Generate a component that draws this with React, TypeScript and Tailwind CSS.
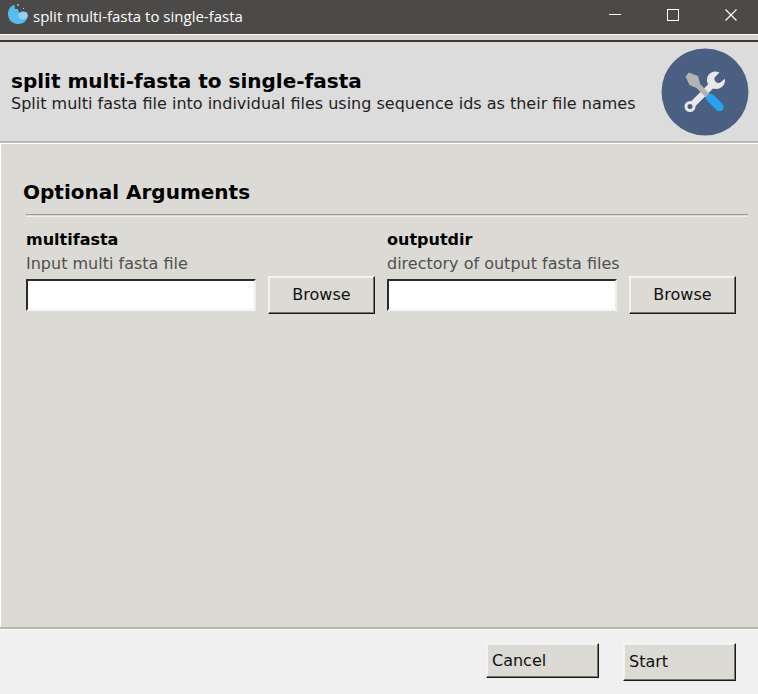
import React from "react";

const raised =
  "border border-t-[#f6f6f4] border-l-[#f6f6f4] border-r-[#1b1a18] border-b-[#1b1a18] bg-[#dcdad5] text-[#111] shadow-[inset_-1px_-1px_0_#77746e,inset_1px_1px_0_#f2f1ee]";

function AppLogo() {
  return (
    <svg width="22" height="22" viewBox="0 0 22 22" aria-hidden="true">
      <path
        d="M7 2C3.500 3 1 6.500 1 11c0 5.700 4.500 10 10 10S20.300 17.500 20.800 12.500C20.500 9.500 19 8.600 16.800 9.200c-1.500 0-2.300 1.500-3.800 1.500C11.500 10 12.500 8 11 7.500 9.500 7.500 10 6 8.500 6 6.500 5.500 9 3.500 7 2z"
        fill="#55bdee"
      />
      <ellipse cx="16" cy="12.500" rx="4.800" ry="4" fill="#93d0ef" />
      <rect x="10" y="1" width="2" height="2" fill="#55bdee" />
      <rect x="8" y="6" width="3" height="2" fill="#55bdee" />
      <rect x="16" y="5" width="1" height="1" fill="#93d0ef" />
    </svg>
  );
}

function ToolsIcon() {
  return (
    <svg width="88" height="88" viewBox="0 0 88 88" className="shrink-0" aria-hidden="true">
      <circle cx="44" cy="44" r="43.500" fill="#4b5f83" />
      <path d="M32 56L52 36" stroke="#e8e8e8" strokeWidth="6.500" />
      <circle cx="29" cy="58.500" r="4" fill="#4b5f83" stroke="#e8e8e8" strokeWidth="3" />
      <path
        d="M58.500 24.500C52 21.500 46 25.500 46 32c0 5 3.500 9 9 9 5.500 0 9.500-4 9-10.200l-5.500 4.200c-3.500 0-5.500-2-5-5.500z"
        fill="#e8e8e8"
      />
      <path d="M28 24.500l9 3.500 2.200 8L49 46.500 45.500 50 35.500 40l-7-3-4-8.500z" fill="#b3b3b3" />
      <path d="M49.500 50L58.500 59" stroke="#23a5f2" strokeWidth="8.500" strokeLinecap="round" />
    </svg>
  );
}

function TitleBar() {
  const control = "flex h-[30px] w-[54px] items-center justify-center";
  return (
    <div className="flex h-[34px] items-start bg-[#4c4a48] pl-[7px] text-white">
      <div className="flex h-8 flex-1 items-center gap-1">
        <div className="-mt-1">
          <AppLogo />
        </div>
        <span className="font-['Open_Sans','Noto_Sans',sans-serif] text-[15px] leading-5">
          split multi-fasta to single-fasta
        </span>
      </div>
      <div className="flex gap-1">
        <button type="button" aria-label="Minimize" className={control}>
          <svg width="12" height="12"><path d="M0 5.500h12" stroke="white" /></svg>
        </button>
        <button type="button" aria-label="Maximize" className={control}>
          <svg width="12" height="12"><rect x=".5" y=".5" width="11" height="11" fill="none" stroke="white" /></svg>
        </button>
        <button type="button" aria-label="Close" className={control}>
          <svg width="12" height="12"><path d="M.5.5l11 11M11.500.5l-11 11" stroke="white" strokeWidth="1.200" /></svg>
        </button>
      </div>
    </div>
  );
}

function FileField({ id, help }: { id: string; help: string }) {
  return (
    <div>
      <label htmlFor={id} className="block text-[16px] leading-6 font-bold">
        {id}
      </label>
      <p className="text-[16px] leading-6 text-[#505050]">{help}</p>
      <div className="flex items-center gap-3">
        <input
          id={id}
          type="text"
          className="h-8 min-w-0 flex-1 border-2 border-t-[#2b2a28] border-r-[#eeece8] border-b-[#f6f6f4] border-l-[#2b2a28] bg-white px-1 text-[16px] outline-none"
        />
        <button type="button" className={`${raised} h-[38px] w-[107px] text-[16px]`}>
          Browse
        </button>
      </div>
    </div>
  );
}

export default function App() {
  return (
    <div className="flex min-h-screen flex-col bg-[#dcdad5] font-['DejaVu_Sans',sans-serif] text-black">
      <TitleBar />
      <div className="h-2 border-t border-b-2 border-t-white border-b-[#3c3a38] bg-[#d6d3cf]" />
      <header className="flex items-center justify-between border-b-2 border-b-[#b9b7b1] bg-[#dcdcdc] pt-[6px] pr-[9px] pb-[5px] pl-[11px]">
        <div>
          <h1 className="text-[20px] leading-6 font-bold">split multi-fasta to single-fasta</h1>
          <p className="text-[16px] leading-[22px] whitespace-nowrap text-[#222]">
            Split multi fasta file into individual files using sequence ids as their file names
          </p>
        </div>
        <ToolsIcon />
      </header>
      <main className="flex-1 border-t border-l border-white pt-[34px] pr-[10px] pl-[22px]">
        <h2 className="text-[20px] leading-7 font-bold">Optional Arguments</h2>
        <div className="mt-2 ml-[3px] h-[3px] border-t border-b border-t-[#9b9993] border-b-[#f0efec]" />
        <div className="mt-[11px] grid grid-cols-2 gap-3 pr-3 pl-[3px]">
          <FileField id="multifasta" help="Input multi fasta file" />
          <FileField id="outputdir" help="directory of output fasta files" />
        </div>
      </main>
      <footer className="border-t-2 border-t-[#b9b7b1] bg-[#f0f0f0]">
        <div className="flex items-start justify-end gap-6 border-t border-white pt-[13px] pr-[22px] pb-[13px]">
          <button type="button" className={`${raised} h-[35px] w-[113px] pl-[5px] text-left text-[16px]`}>
            Cancel
          </button>
          <button type="button" className={`${raised} h-[38px] w-[113px] pl-[5px] text-left text-[16px]`}>
            Start
          </button>
        </div>
      </footer>
    </div>
  );
}
